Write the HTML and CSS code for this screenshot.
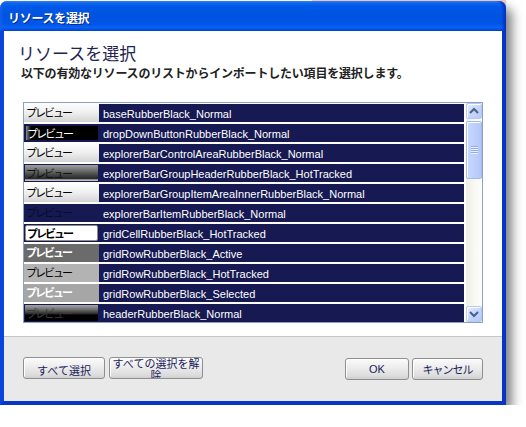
FILE: index.html
```html
<!DOCTYPE html>
<html lang="ja">
<head>
<meta charset="utf-8">
<title>リソースを選択</title>
<link rel="stylesheet" href="styles.css">
</head>
<body>
<div class="backdrop"></div>
<div class="window">
  <div class="titlebar"><span class="title">リソースを選択</span></div>
  <div class="frame">
    <div class="content">
      <h1 class="heading">リソースを選択</h1>
      <p class="subtitle">以下の有効なリソースのリストからインポートしたい項目を選択します。</p>
      <div class="listbox">
        <div class="rows">
          <div class="row"><div class="preview p-light"><span class="pv">プレビュー</span></div><div class="name">baseRubberBlack_Normal</div></div>
          <div class="row"><div class="preview p-navy"><div class="chip c-black"><span class="pv">プレビュー</span></div></div><div class="name">dropDownButtonRubberBlack_Normal</div></div>
          <div class="row"><div class="preview p-light"><span class="pv">プレビュー</span></div><div class="name">explorerBarControlAreaRubberBlack_Normal</div></div>
          <div class="row"><div class="preview p-navy"><div class="chip c-group"><span class="pv">プレビュー</span></div></div><div class="name">explorerBarGroupHeaderRubberBlack_HotTracked</div></div>
          <div class="row"><div class="preview p-light"><span class="pv">プレビュー</span></div><div class="name">explorerBarGroupItemAreaInnerRubberBlack_Normal</div></div>
          <div class="row"><div class="preview p-navy"><span class="pv pv-dark">プレビュー</span></div><div class="name">explorerBarItemRubberBlack_Normal</div></div>
          <div class="row"><div class="preview p-navy"><div class="chip c-cell"><span class="pv pv-bold">プレビュー</span></div></div><div class="name">gridCellRubberBlack_HotTracked</div></div>
          <div class="row"><div class="preview p-active"><span class="pv pv-bold pv-white">プレビュー</span></div><div class="name">gridRowRubberBlack_Active</div></div>
          <div class="row"><div class="preview p-hot"><span class="pv">プレビュー</span></div><div class="name">gridRowRubberBlack_HotTracked</div></div>
          <div class="row"><div class="preview p-selected"><span class="pv pv-bold pv-white">プレビュー</span></div><div class="name">gridRowRubberBlack_Selected</div></div>
          <div class="row"><div class="preview p-navy"><div class="chip c-header"><span class="pv pv-gray">プレビュー</span></div></div><div class="name">headerRubberBlack_Normal</div></div>
        </div>
        <div class="scrollbar">
          <div class="sb-btn"><svg width="14" height="14" viewBox="0 0 14 14"><path d="M3 9 L7 5 L11 9" fill="none" stroke="#4d6185" stroke-width="2"/></svg></div>
          <div class="sb-thumb"><span class="grip"></span></div>
          <div class="sb-track"></div>
          <div class="sb-btn"><svg width="14" height="14" viewBox="0 0 14 14"><path d="M3 5 L7 9 L11 5" fill="none" stroke="#4d6185" stroke-width="2"/></svg></div>
        </div>
      </div>
    </div>
    <div class="footer">
      <div class="btn-group">
        <button class="btn b-all">すべて選択</button>
        <button class="btn b-clear"><span>すべての選択を解除</span></button>
      </div>
      <div class="btn-group right">
        <button class="btn b-ok">OK</button>
        <button class="btn b-cancel">キャンセル</button>
      </div>
    </div>
  </div>
</div>
</body>
</html>
```
FILE: styles.css
```css
* { box-sizing: border-box; }
body {
  margin: 0;
  background: #fff;
  position: relative;
  font-family: "Liberation Sans", "Noto Sans CJK JP", sans-serif;
}
.backdrop {
  position: absolute;
  left: 312px;
  top: 0;
  width: 194px;
  height: 10px;
  background: #f6cccc;
  z-index: 0;
}
.window {
  position: relative;
  z-index: 1;
  width: 506px;
  margin-top: 1px;
  border-radius: 7px 7px 0 0;
  box-shadow: 6px 7px 11px rgba(0, 0, 0, 0.5);
}
.titlebar {
  height: 30px;
  border-radius: 7px 7px 0 0;
  background: linear-gradient(180deg, #4a94f8 0%, #0d66ee 7%, #0058e8 18%, #0053e0 50%, #0056e8 78%, #0a62f6 88%, #0052e2 95%, #0040c4 100%);
  box-shadow: inset -4px 0 3px -1px #0034c4, inset 3px 0 3px -1px #1660e8;
  padding: 4px 0 0 8px;
}
.title {
  display: block;
  color: #fff;
  font-family: "Noto Sans CJK JP", sans-serif;
  font-weight: bold;
  font-size: 12px;
  line-height: 26px;
  letter-spacing: -0.3px;
  text-shadow: 1px 1px 0 #0b2a86;
}
.frame {
  border-left: 4px solid #0a46dc;
  border-right: 4px solid #0634c6;
  border-bottom: 4px solid #0636c8;
}
.content {
  background: #fff;
  padding: 10px 19px 13px 19px;
}
.heading {
  margin: 0 0 0 -5px;
  font-family: "Noto Sans CJK JP", sans-serif;
  font-weight: 400;
  font-size: 17px;
  line-height: 23px;
  color: #1f2452;
}
.subtitle {
  margin: 0 0 20px -2px;
  font-family: "Noto Sans CJK JP", sans-serif;
  font-weight: bold;
  font-size: 12px;
  line-height: 18px;
  letter-spacing: -0.2px;
  color: #222;
}
.listbox {
  display: flex;
  height: 221px;
  border: 1px solid #8aa2c2;
  background: #fff;
}
.rows {
  width: 440px;
  padding-top: 1px;
  overflow: hidden;
}
.row {
  display: flex;
  height: 18px;
  margin-bottom: 2px;
}
.preview {
  width: 75px;
  flex: none;
  display: flex;
}
.name {
  flex: 1;
  background: #171a52;
  color: #fff;
  font-size: 11px;
  line-height: 16px;
  padding: 2px 0 0 4px;
  white-space: nowrap;
  overflow: hidden;
}
.pv {
  display: block;
  font-family: "Noto Sans CJK JP", sans-serif;
  font-size: 11px;
  line-height: 16px;
  letter-spacing: -2px;
  padding-left: 2px;
  color: #000;
  white-space: nowrap;
}
.pv-bold { font-weight: bold; }
.pv-white { color: #fff; }
.pv-dark { color: #0a0b26; }
.pv-gray { color: #3c3c3c; }
.p-light { background: linear-gradient(180deg, #fdfdfd 0%, #eeeeee 50%, #d4d4d4 100%); }
.p-navy { background: #171a52; }
.p-active { background: #6b6b6b; }
.p-hot { background: #b3b3b3; }
.p-selected { background: #a6a6a6; }
.chip {
  flex: 1;
  margin: 2px 1px 2px 2px;
  display: flex;
  align-items: center;
}
.chip .pv { line-height: 13px; padding-left: 1px; }
.c-black {
  background: linear-gradient(90deg, #8a8a8a 0px, #3a3a3a 3px, #000 5px, #000 100%);
}
.c-black .pv { color: #fff; }
.c-group {
  margin: 1px 1px 1px 1px;
  background: linear-gradient(180deg, #a0a0a0 0%, #6e6e6e 35%, #3a3a3a 70%, #2a2a2a 85%, #a8a8a8 92%, #cfcfcf 100%);
}
.c-group .pv { color: #111; }
.c-cell {
  margin: 1px 1px 1px 1px;
  background: #fff;
  border: 1px solid #8c8c8c;
  border-radius: 2px;
}
.c-header {
  margin: 1px 1px 1px 1px;
  background: linear-gradient(180deg, #a6a6a6 0%, #6a6a6a 30%, #2a2a2a 55%, #000 62%, #000 100%);
}
.scrollbar {
  width: 16px;
  margin-left: 2px;
  display: flex;
  flex-direction: column;
  background: linear-gradient(90deg, #eeede6 0%, #f8f8f4 50%, #fdfdfb 100%);
}
.sb-btn {
  height: 16px;
  flex: none;
  display: flex;
  align-items: center;
  justify-content: center;
  border: 1px solid #b7c9f3;
  border-radius: 2px;
  background: linear-gradient(135deg, #e6eefe 0%, #c6d6fc 50%, #b4c8fa 100%);
  box-shadow: inset 1px 1px 0 #fff;
}
.sb-thumb {
  margin-top: 2px;
  height: 58px;
  flex: none;
  display: flex;
  align-items: center;
  justify-content: center;
  border: 1px solid #a3b8ee;
  border-radius: 2px;
  background: linear-gradient(90deg, #c9d8fd 0%, #bccffc 60%, #b3c7f8 100%);
  box-shadow: inset 1px 1px 0 #fff;
}
.grip {
  display: block;
  width: 7px;
  height: 8px;
  background: repeating-linear-gradient(180deg, #8faaeb 0, #8faaeb 1px, #eef3ff 1px, #eef3ff 2px);
}
.sb-track { flex: 1; }
.footer {
  height: 65px;
  border-top: 1px solid #c6c6c6;
  background: #e9e9e9;
  padding: 20px 19px 0 19px;
  display: flex;
  justify-content: space-between;
  align-items: flex-start;
}
.btn-group { display: flex; gap: 4px; }
.btn-group.right { gap: 3px; margin-top: 1px; }
.btn {
  height: 22px;
  padding: 0;
  border: 1px solid #8d8f91;
  border-radius: 3px;
  background: linear-gradient(180deg, #fbfbfb 0%, #ececec 45%, #dcdcdc 85%, #cfcfcf 100%);
  box-shadow: inset 1px 1px 0 #fff;
  color: #1b1d5a;
  font-family: "Liberation Sans", "Noto Sans CJK JP", sans-serif;
  font-size: 11px;
  display: flex;
  align-items: center;
  justify-content: center;
  overflow: hidden;
}
.b-all { width: 82px; padding-top: 3px; }
.b-clear {
  width: 94px;
  align-items: flex-start;
  line-height: 12px;
  padding: 0 1px;
  text-align: center;
}
.b-clear span { display: block; }
.b-ok { width: 64px; }
.b-cancel { width: 71px; letter-spacing: -1px; }
```
